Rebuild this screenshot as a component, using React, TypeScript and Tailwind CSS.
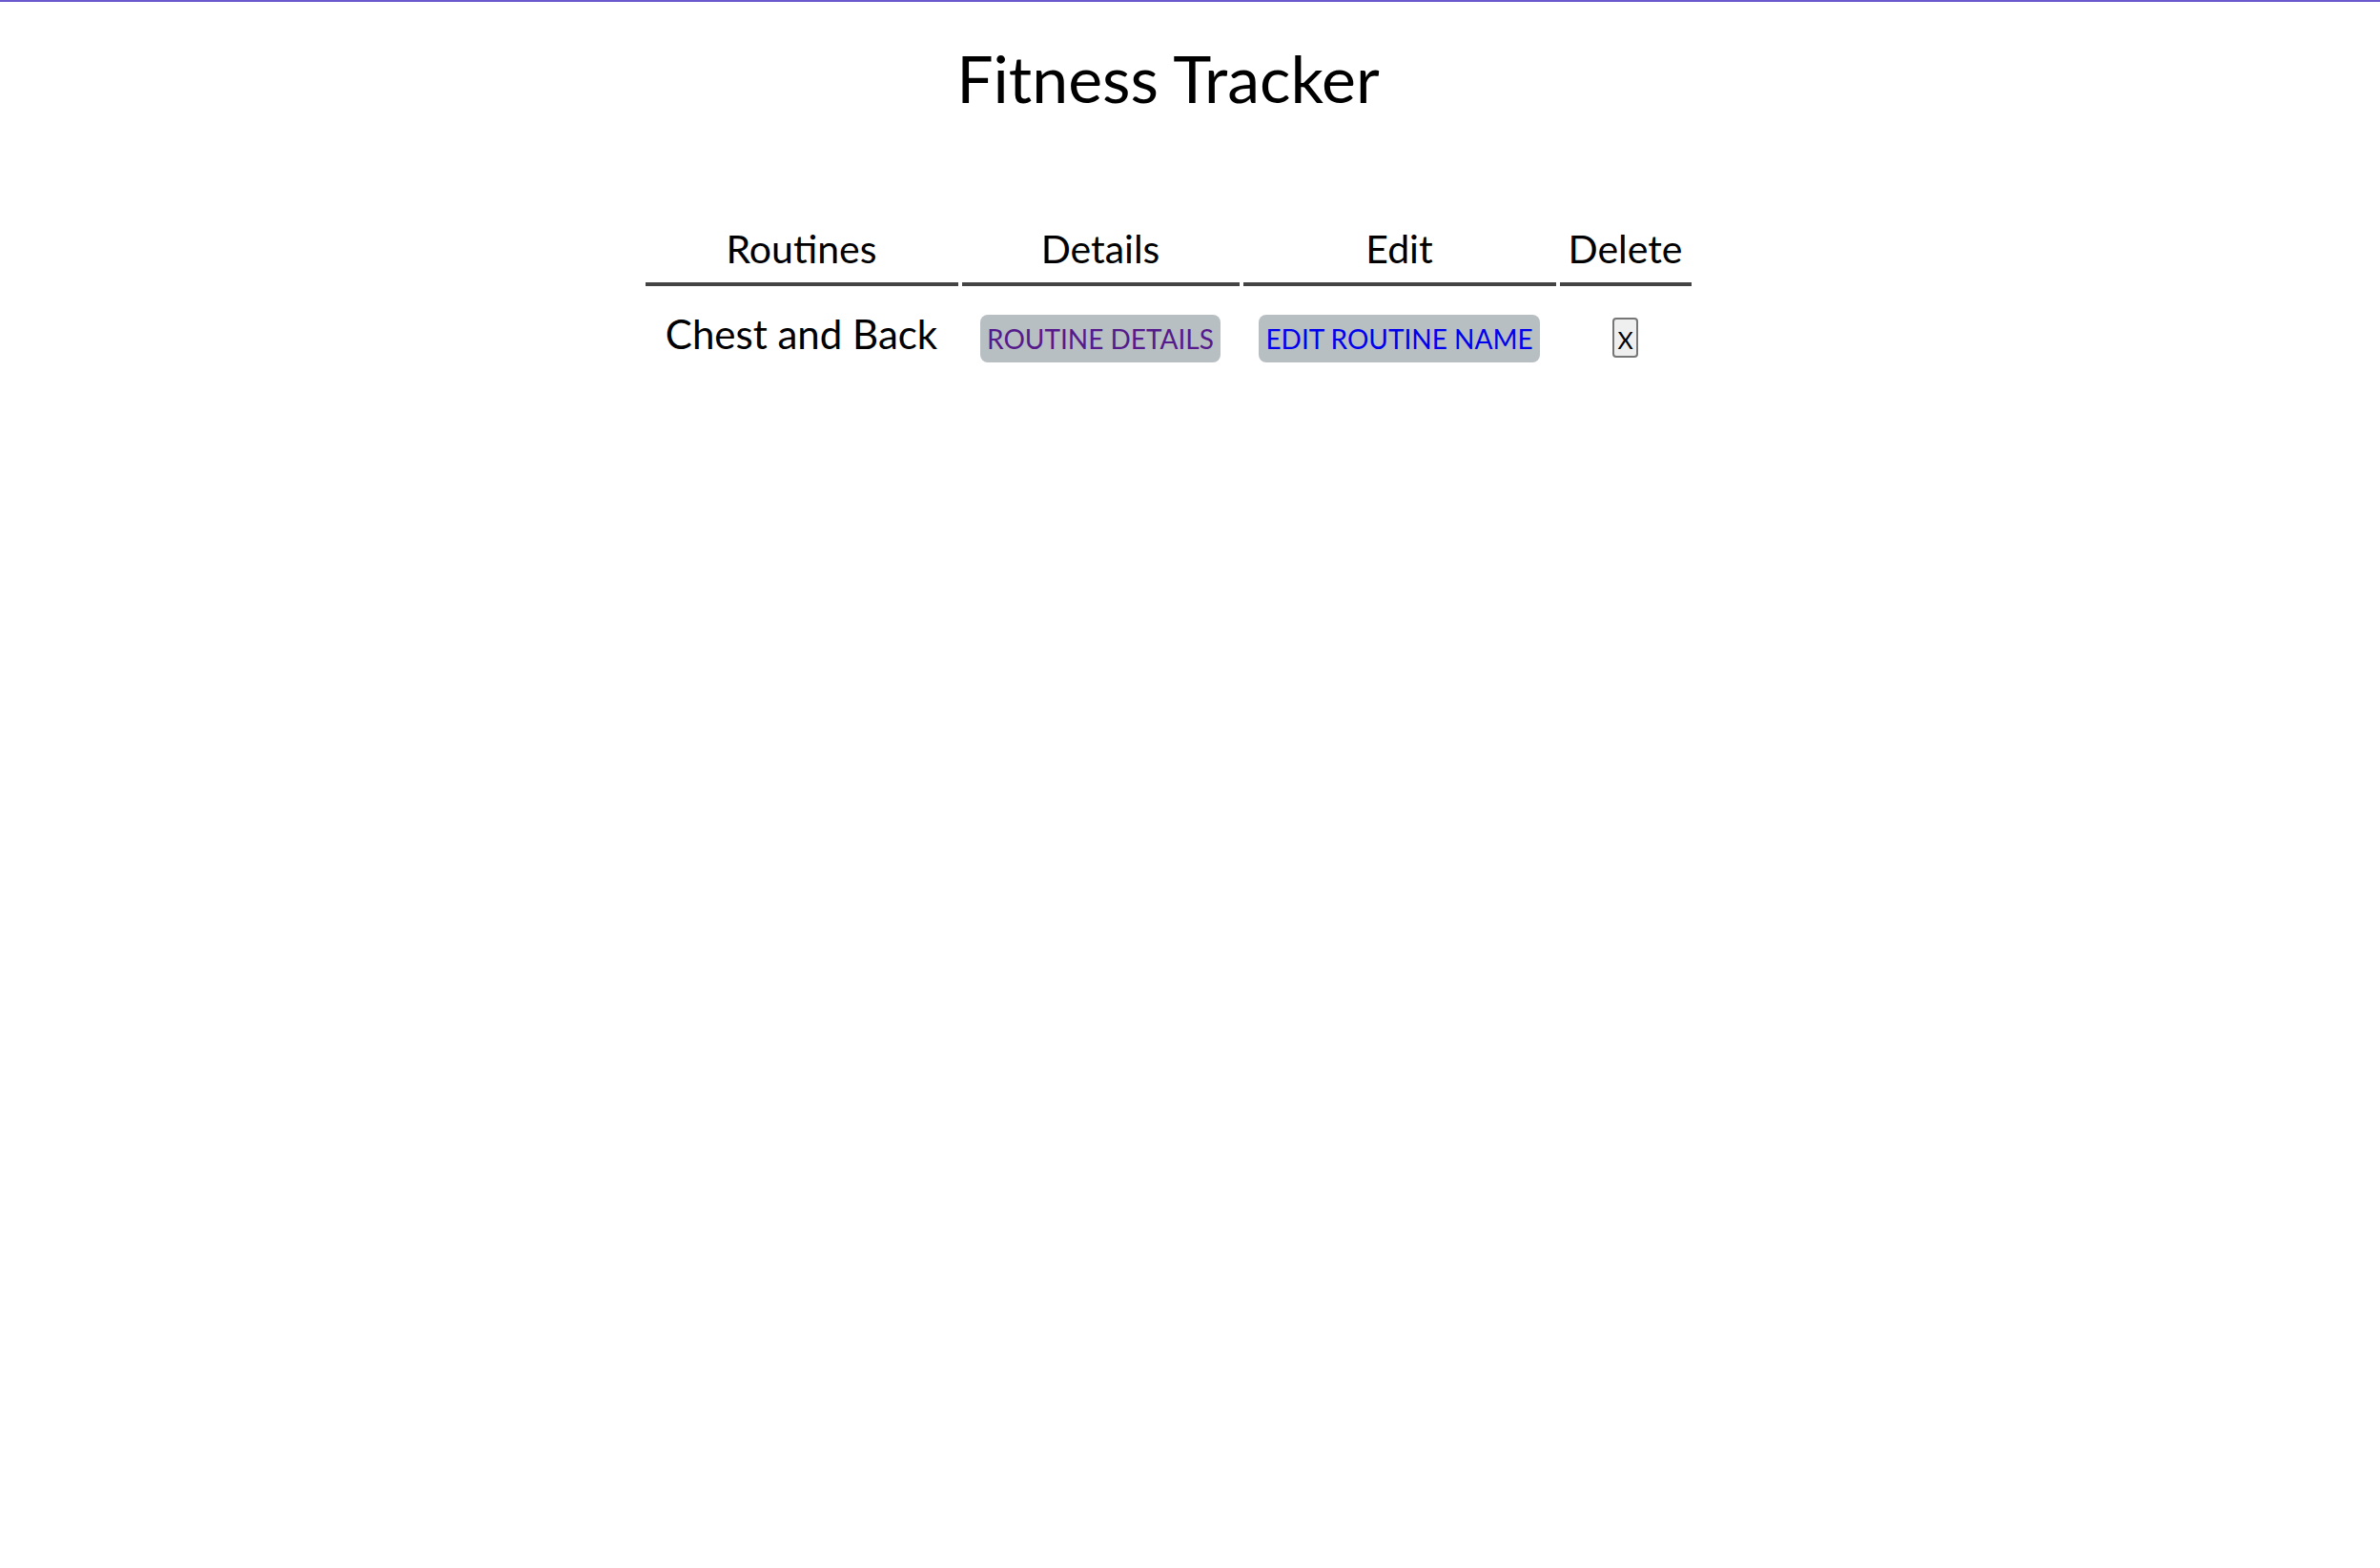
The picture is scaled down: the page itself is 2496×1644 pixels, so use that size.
import React from "react";

export default function App() {
  const font = { fontFamily: "Lato, 'Open Sans', sans-serif" };
  return (
    <div className="min-h-screen bg-white text-black" style={font}>
      <div className="h-[2px] w-full bg-[#6a5acd]" />
      <div className="flex flex-col items-center pr-[46px]">
        <h1 className="mt-[46px] text-[68px] leading-none font-normal">Fitness Tracker</h1>
        <table className="mt-[124px] border-separate border-spacing-x-[4px] border-spacing-y-0">
          <thead>
            <tr>
              <th className="w-[328px] pb-[15px] border-b-4 border-[#444] text-[41px] leading-none font-normal text-center">Routines</th>
              <th className="w-[291px] pb-[15px] border-b-4 border-[#444] text-[41px] leading-none font-normal text-center">Details</th>
              <th className="w-[328px] pb-[15px] border-b-4 border-[#444] text-[41px] leading-none font-normal text-center">Edit</th>
              <th className="w-[138px] pb-[15px] border-b-4 border-[#444] text-[41px] leading-none font-normal text-center">Delete</th>
            </tr>
          </thead>
          <tbody>
            <tr>
              <td className="pt-[29px] align-baseline text-center text-[42px] leading-none">Chest and Back</td>
              <td className="pt-[29px] align-baseline text-center">
                <button className="inline-block rounded-[8px] bg-[#b8bfc2] px-[7px] py-[11px] text-[28px] leading-none text-[#551a8b]">ROUTINE DETAILS</button>
              </td>
              <td className="pt-[29px] align-baseline text-center">
                <button className="inline-block rounded-[8px] bg-[#b8bfc2] px-[7px] py-[11px] text-[28px] leading-none text-[#0000ee]">EDIT ROUTINE NAME</button>
              </td>
              <td className="pt-[29px] align-baseline text-center">
                <button className="inline-block rounded-[4px] border-2 border-[#767676] bg-[#efefef] px-[3px] pt-[9px] pb-[4px] text-[25px] leading-none text-black">X</button>
              </td>
            </tr>
          </tbody>
        </table>
      </div>
    </div>
  );
}
